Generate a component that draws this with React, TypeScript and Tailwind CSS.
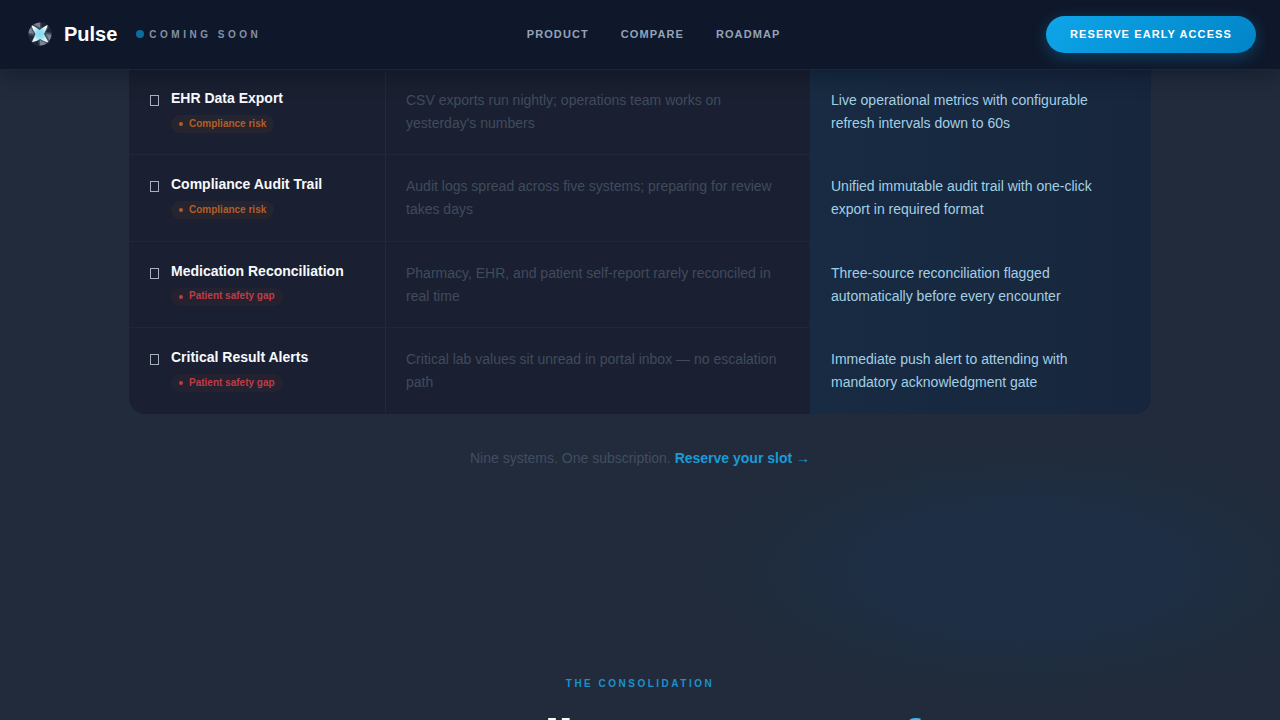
import React from "react";

type Risk = "compliance" | "safety";

interface Row {
  name: string;
  risk: Risk;
  before: string;
  after: string;
}

const rows: Row[] = [
  {
    name: "EHR Data Export",
    risk: "compliance",
    before: "CSV exports run nightly; operations team works on yesterday's numbers",
    after: "Live operational metrics with configurable refresh intervals down to 60s",
  },
  {
    name: "Compliance Audit Trail",
    risk: "compliance",
    before: "Audit logs spread across five systems; preparing for review takes days",
    after: "Unified immutable audit trail with one-click export in required format",
  },
  {
    name: "Medication Reconciliation",
    risk: "safety",
    before: "Pharmacy, EHR, and patient self-report rarely reconciled in real time",
    after: "Three-source reconciliation flagged automatically before every encounter",
  },
  {
    name: "Critical Result Alerts",
    risk: "safety",
    before: "Critical lab values sit unread in portal inbox — no escalation path",
    after: "Immediate push alert to attending with mandatory acknowledgment gate",
  },
];

const links = ["Product", "Compare", "Roadmap"];

function Logo() {
  return (
    <svg viewBox="0 0 32 32" className="size-8" aria-hidden="true">
      <defs>
        <linearGradient id="disc" x1="0" y1="0" x2="1" y2="1">
          <stop offset="0" stopColor="#465062" />
          <stop offset="0.5" stopColor="#3a4455" />
          <stop offset="1" stopColor="#5d6777" />
        </linearGradient>
        <radialGradient id="star">
          <stop offset="0" stopColor="#7fd8ee" />
          <stop offset="0.5" stopColor="#9ae2f2" />
          <stop offset="1" stopColor="#f1fbfd" />
        </radialGradient>
      </defs>
      <circle cx="16" cy="16" r="11.5" fill="url(#disc)" />
      <path d="M17 4.500 Q21 5 23 7 L18 10Z M4.500 17 Q4.500 21 7.500 23.500 L10 18Z M15 27.500 Q11 27 8.500 25 L14 22Z M27.500 15 Q27.500 11 25 8.500 L22 14Z" fill="#1d2638" />
      <path d="M16 4.500 Q12 5 10 6.500 L16 10Z M4.500 15 Q5 11 7 9.500 L10 16Z M16 27.500 Q20 27 22.500 25.500 L16 22Z M27.500 17 Q27 20 25.500 22.500 L22 16Z" fill="#97a0ac" opacity="0.65" />
      <path d="M8.500 7.500 Q12 9 15.500 12 Q19 9 23.500 7 Q24 8 20 16 Q22 20 24.500 24.500 Q20 23.500 16 21 Q13 23.500 8 24 Q10 20 11.500 16 Q9 12 7.500 8Z" fill="url(#star)" />
    </svg>
  );
}

function RiskBadge({ risk }: { risk: Risk }) {
  const safety = risk === "safety";
  return (
    <span
      className={
        safety
          ? "inline-flex h-[18px] items-center gap-1.5 rounded-full bg-[#ef4444]/5 px-2 text-[10px] font-bold text-[#bd3d46]"
          : "inline-flex h-[18px] items-center gap-1.5 rounded-full bg-[#f97316]/5 px-2 text-[10px] font-bold text-[#b25e27]"
      }
    >
      <span className="size-1 rounded-full bg-current" />
      {safety ? "Patient safety gap" : "Compliance risk"}
    </span>
  );
}

export default function App() {
  return (
    <div className="min-h-screen bg-[#212b3b] bg-[radial-gradient(ellipse_320px_130px_at_80%_570px,#1e2e46_0%,#1e2e44_50%,#1f2d3e_75%,transparent_100%)] font-['Liberation_Sans',Arial,sans-serif] text-white">
      <header className="sticky top-0 z-10 flex h-[69px] items-center justify-between bg-[#0f172a] px-6 shadow-[0_1px_0_#1b2638,0_4px_24px_rgba(2,6,23,0.4)]">
        <div className="flex items-center pb-px">
          <a href="#top" className="flex items-center gap-2 text-xl font-bold">
            <Logo />
            Pulse
          </a>
          <span className="ml-[19px] flex items-center gap-[5px] text-[10px] font-bold uppercase tracking-[0.35em] text-[#8590a3]">
            <span className="size-2 rounded-full bg-[#0b6c9d]" />
            Coming soon
          </span>
        </div>
        <nav className="flex items-center gap-8" aria-label="Main">
          {links.map((l) => (
            <a key={l} href={`#${l.toLowerCase()}`} className="text-[11px] font-bold uppercase tracking-[0.1em] text-[#94a3b8]">
              {l}
            </a>
          ))}
        </nav>
        <button
          type="button"
          className="h-[37px] rounded-full bg-linear-135 from-[#0ea5e9] to-[#0284c7] px-6 text-[11px] font-bold uppercase tracking-[0.1em] text-white shadow-[0_4px_16px_rgba(14,165,233,0.3)]"
        >
          Reserve early access
        </button>
      </header>

      <main id="top">
        <section id="compare" className="mx-auto max-w-[1022px]">
          <div className="overflow-hidden rounded-b-2xl bg-[#1a2031]">
            <table className="h-[345px] w-full table-fixed border-separate border-spacing-0 text-left text-sm">
              <colgroup>
                <col className="w-[257px]" />
                <col className="w-[424px]" />
                <col />
              </colgroup>
              <tbody className="bg-[linear-gradient(90deg,transparent_66.6%,#172b42_66.6%,#17263d_100%)]">
                {rows.map((r, i) => {
                  const line = i < rows.length - 1 ? "border-[#1f2838]" : "border-transparent";
                  return (
                    <tr key={r.name}>
                      <th scope="row" className={`border-b ${line} pt-5 pr-5 pb-[19px] pl-[21px] align-top font-normal shadow-[inset_-1px_0_0_#202a3a]`}>
                        <div className="flex gap-3">
                          <span className="mt-[6px] h-[11px] w-[9px] shrink-0 border border-[#cbd5e1]/80" />
                          <div>
                            <div className="leading-[18px] font-bold whitespace-nowrap text-[#f8fafc]">{r.name}</div>
                            <div className="mt-2 flex">
                              <RiskBadge risk={r.risk} />
                            </div>
                          </div>
                        </div>
                      </th>
                      <td className={`border-b ${line} px-5 pt-5 pb-[19px] align-top leading-[23px] text-[#404b5c]`}>{r.before}</td>
                      <td className="border-b border-l border-b-transparent border-l-[#192e43] px-5 pt-5 pb-[19px] align-top leading-[23px] text-[#a3cfe4]">
                        {r.after}
                      </td>
                    </tr>
                  );
                })}
              </tbody>
            </table>
          </div>
          <p className="mt-8 text-center text-sm leading-6 text-[#424e60]">
            Nine systems. One subscription.{" "}
            <a href="#reserve" className="font-bold text-[#1a9bd7]">
              Reserve your slot →
            </a>
          </p>
        </section>

        <section id="product" className="h-[250px] overflow-hidden pt-[206px] text-center">
          <p className="text-[10px] leading-4 font-bold uppercase tracking-[0.25em] text-[#1a91cc]">The consolidation</p>
          <h2 className="mt-4 text-[56px] leading-[62px] font-bold tracking-[-0.03em] text-[#f8fafc]">
            Answer all your nurses <span className="text-[#38bdf8]">for</span>
          </h2>
        </section>
      </main>
    </div>
  );
}
